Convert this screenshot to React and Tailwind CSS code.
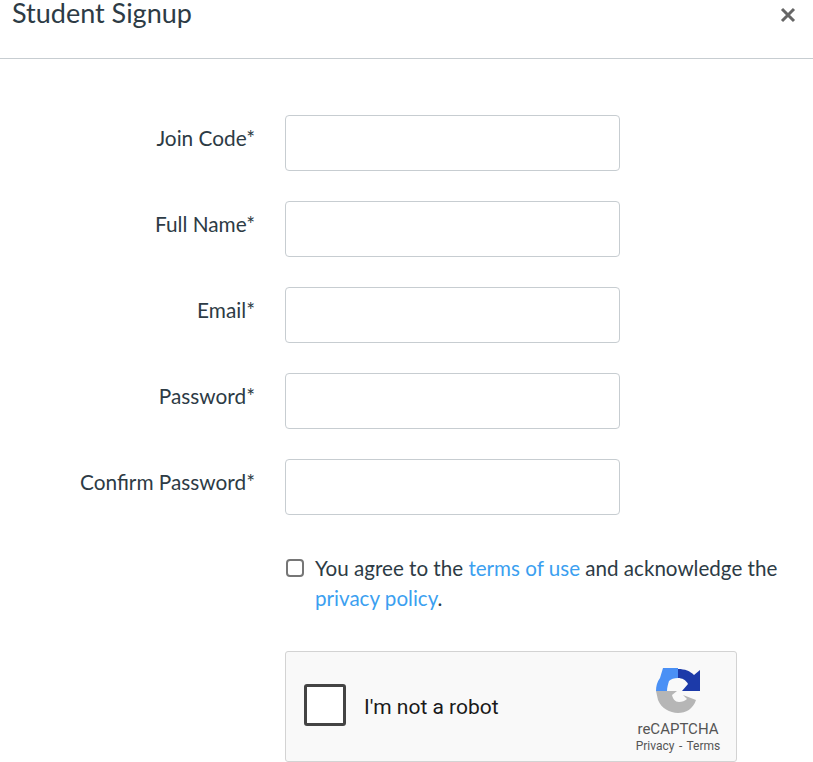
import React from "react";

const fields = ["Join Code", "Full Name", "Email", "Password", "Confirm Password"];

const RecaptchaLogo = () => (
  <svg width="46" height="46" viewBox="0 0 46 46">
    <path d="M1 23 C1 18 2 14 5 10 L8 0 L23 0 L23 10 C19 10 16 11 14 13 C13 16 12 20 12 23 Z" fill="#4a90f5" />
    <path d="M23 1 C30 1 35 3 39 7 L45 2 L45 23 L27 23 L33 16 C31 12 27 10 23 10 Z" fill="#1c3aa9" />
    <path d="M1 23 L22 23 L17 27 C18 31 20 34 24 34 C27 34 30 33 32 31 L28 27 L41 32 C38 41 31 45 23 45 C15 45 6 40 3 32 Z" fill="#b6b6b6" />
  </svg>
);

const App = () => {
  return (
    <div className="h-[762px] overflow-hidden bg-white font-['Lato',sans-serif] text-[#2d3b45]">
      <div className="flex h-[59px] justify-between border-b border-[#c7cdd1] pl-3 pr-[17px]">
        <h1 className="text-[27px] leading-[26px]">Student Signup</h1>
        <svg className="mt-[7px] h-4 w-4" viewBox="0 0 16 16">
          <path d="M2 2 L14 14 M14 2 L2 14" stroke="#666" strokeWidth="3" />
        </svg>
      </div>

      <div className="flex flex-col gap-[30px] pt-14">
        {fields.map((f) => (
          <div key={f} className="flex items-center">
            <label className="w-[255px] pb-2.5 text-right text-[20.8px] leading-[30px]">{f}*</label>
            <input className="ml-[30px] h-14 w-[335px] rounded border border-[#c7cdd1] bg-white" />
          </div>
        ))}
      </div>

      <div className="mt-[38px] ml-[286px] flex w-[500px] gap-[11px]">
        <input
          type="checkbox"
          className="mt-[6px] h-[18px] w-[18px] shrink-0 appearance-none rounded-[4px] border-2 border-[#767676]"
        />
        <p className="text-[20.6px] leading-[30px]">
          You agree to the <a className="text-[#3c9ff0]">terms of use</a> and acknowledge the{" "}
          <a className="text-[#3c9ff0]">privacy policy</a>.
        </p>
      </div>

      <div className="mt-[38px] ml-[285px] flex h-[111px] w-[452px] rounded-[3px] border border-[#d3d3d3] bg-[#f9f9f9] font-['Roboto',sans-serif]">
        <div className="ml-[18px] mt-[32px] h-[42px] w-[42px] rounded-[3px] border-[3px] border-[#444] bg-white" />
        <span className="ml-[18px] mt-[43px] text-[21px] leading-6 text-[#1a1a1a]">I'm not a robot</span>
        <div className="ml-auto mr-[13px] flex w-[90px] flex-col items-center pt-4 text-[#555]">
          <RecaptchaLogo />
          <span className="mt-[7px] text-[15px] leading-4">reCAPTCHA</span>
          <span className="mt-px text-xs leading-4 [word-spacing:1.5px]">Privacy - Terms</span>
        </div>
      </div>
    </div>
  );
};

export default App;
